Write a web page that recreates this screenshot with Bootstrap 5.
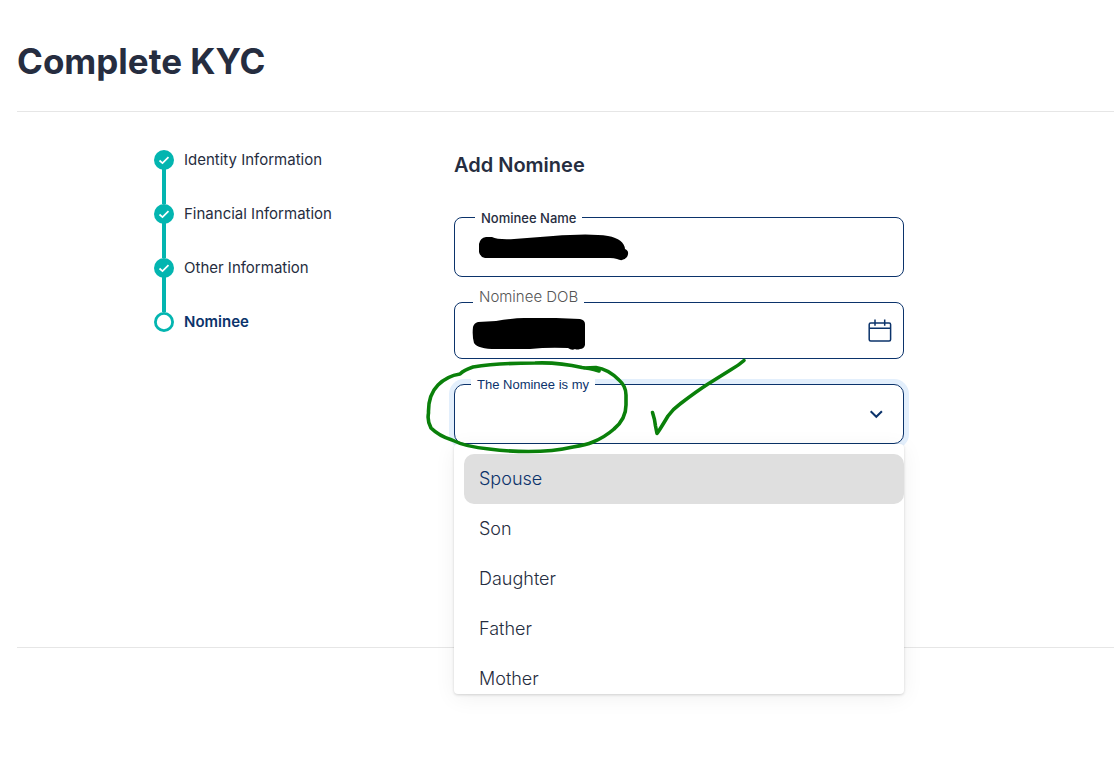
<!DOCTYPE html>
<html lang="en">
<head>
<meta charset="utf-8">
<meta name="viewport" content="width=device-width, initial-scale=1">
<title>Complete KYC</title>
<link href="https://cdn.jsdelivr.net/npm/bootstrap@5.3.0/dist/css/bootstrap.min.css" rel="stylesheet">
<style>
  :root { --ink: #262d40; --navy: #0b336b; --teal: #03b5b0; --rule: #e6e6e6; }
  body { font-family: Inter, "Liberation Sans", sans-serif; color: var(--ink); background: #fff; padding-left: 17px; }
  .page-head { padding: 39px 0 28px; border-bottom: 1px solid var(--rule); }
  .page-head h1 { font-size: 35px; line-height: 44px; font-weight: 700; }
  .kyc-body { padding: 38px 17px 203px 137px; border-bottom: 1px solid var(--rule); }
  .steps { width: 300px; font-size: 15px; line-height: 20px; flex-shrink: 0; }
  .steps li { position: relative; height: 54px; gap: 10px; }
  .steps li:not(:last-child)::before { content: ""; position: absolute; left: 8px; top: 18px; bottom: 0; width: 4px; background: var(--teal); }
  .steps svg { width: 20px; height: 20px; }
  .steps a { color: var(--ink); }
  .steps .current { color: var(--navy); font-weight: 600; }
  .form-col { max-width: 450px; }
  .form-col h2 { font-size: 20px; line-height: 30px; font-weight: 600; margin-bottom: 37px; }
  .field { position: relative; margin-bottom: 25px; }
  .field .form-control, .field .form-select { height: 60px; border: 1px solid var(--navy); border-radius: 8px; padding: 0 25px; background-image: none; color: var(--ink); }
  .field .short { height: 57px; }
  .field .form-select { border-radius: 10px; box-shadow: 0 0 0 5px #e3effc; }
  .field label { position: absolute; left: 21px; top: -9px; padding: 0 6px; line-height: 20px; background: #fff; }
  .label-strong { font-size: 13px; font-weight: 500; }
  .label-soft { font-size: 15px; font-weight: 300; color: #555; }
  .field label.label-soft { left: 19px; top: -15px; }
  .label-accent { font-family: "Liberation Sans", sans-serif; font-size: 13px; color: var(--navy); }
  .field label.label-accent { left: 17px; }
  .field-icon { position: absolute; right: 12px; top: 50%; transform: translateY(-50%); border: 0; background: none; padding: 0; line-height: 0; }
  .ink-mark { position: absolute; pointer-events: none; }
  .ink-name { left: 24px; top: 16px; }
  .ink-dob { left: 18px; top: 14px; }
  .ink-pen { left: -34px; top: -34px; z-index: 1010; }
  .options { position: absolute; display: block; top: 100%; left: 0; width: 100%; height: 250px; overflow: hidden; padding: 10px 0 0 10px; border: 0; border-radius: 4px; box-shadow: 0 1px 3px rgba(0,0,0,.16), 0 4px 22px rgba(0,0,0,.06); }
  .options .dropdown-item { height: 50px; padding: 0 15px 2px; font-size: 18px; font-weight: 300; color: var(--ink); border-radius: 10px; }
  .options .dropdown-item.active { background: #dfdfdf; color: var(--navy); }
</style>
</head>
<body>
<div class="min-vh-100">
<header class="page-head"><h1 class="mb-0">Complete KYC</h1></header>
<main class="kyc-body d-flex">
  <ol class="steps list-unstyled mb-0">
    <li class="d-flex align-items-start"><svg viewBox="0 0 20 20" aria-hidden="true"><circle cx="10" cy="10" r="10" fill="#03b5b0"/><path d="M5.5 10.5l3 2.7 6-6" fill="none" stroke="#fff" stroke-width="1.7"/></svg><a href="#" class="text-decoration-none">Identity Information</a></li>
    <li class="d-flex align-items-start"><svg viewBox="0 0 20 20" aria-hidden="true"><circle cx="10" cy="10" r="10" fill="#03b5b0"/><path d="M5.5 10.5l3 2.7 6-6" fill="none" stroke="#fff" stroke-width="1.7"/></svg><a href="#" class="text-decoration-none">Financial Information</a></li>
    <li class="d-flex align-items-start"><svg viewBox="0 0 20 20" aria-hidden="true"><circle cx="10" cy="10" r="10" fill="#03b5b0"/><path d="M5.5 10.5l3 2.7 6-6" fill="none" stroke="#fff" stroke-width="1.7"/></svg><a href="#" class="text-decoration-none">Other Information</a></li>
    <li class="d-flex align-items-start"><svg viewBox="0 0 20 20" aria-hidden="true"><circle cx="10" cy="10" r="8.6" fill="#fff" stroke="#03b5b0" stroke-width="2.8"/></svg><a href="#" class="text-decoration-none current" aria-current="step">Nominee</a></li>
  </ol>
  <form class="form-col flex-grow-1">
    <h2>Add Nominee</h2>
    <div class="field">
      <input class="form-control" id="name" type="text">
      <label for="name" class="label-strong">Nominee Name</label>
      <svg class="ink-mark ink-name" width="152" height="30" viewBox="0 0 152 30" aria-hidden="true"><path d="M1 10Q2 4 8 3L14 3Q20 6 36 5L75 2Q112-1 130 2Q146 5 147 15Q152 17 149 23Q145 28 139 25Q136 24 132 24L7 24Q2 23 1 18Z" fill="#000" transform="translate(0 1)"/></svg>
    </div>
    <div class="field">
      <input class="form-control short" id="dob" type="text">
      <label for="dob" class="label-soft">Nominee DOB</label>
      <svg class="ink-mark ink-dob" width="116" height="36" viewBox="0 0 116 36" aria-hidden="true"><path d="M6 6L24 5Q42 2 52 2L84 2L108 3Q113 4 113 8L113 29Q112 33 108 33Q105 34 103 33Q100 35 96 32Q76 31 58 33L24 33Q6 33 2 27Q0 20 1 11Q2 7 6 6Z" fill="#000"/></svg>
      <button type="button" class="field-icon" aria-label="Choose date"><svg width="24" height="24" viewBox="0 0 24 24" fill="none" stroke="#0b336b" stroke-width="1.5"><rect x="1.2" y="4" width="21.4" height="18" rx="1.5"/><path d="M1 9.3h22M7 .5v6.2M16.7 .5v6.2"/></svg></button>
    </div>
    <div class="field mb-0">
      <select class="form-select" id="relation"><option selected></option><option>Spouse</option><option>Son</option><option>Daughter</option><option>Father</option><option>Mother</option></select>
      <label for="relation" class="label-accent">The Nominee is my</label>
      <span class="field-icon pe-none"><svg width="32" height="24" viewBox="0 0 32 24" fill="none" stroke="#0b336b" stroke-width="2"><path d="M10.700 9.200l5.600 5.600 5.600-5.600"/></svg></span>
      <div class="options dropdown-menu show">
        <button type="button" class="dropdown-item active">Spouse</button>
        <button type="button" class="dropdown-item">Son</button>
        <button type="button" class="dropdown-item">Daughter</button>
        <button type="button" class="dropdown-item">Father</button>
        <button type="button" class="dropdown-item">Mother</button>
      </div>
      <svg class="ink-mark ink-pen" width="340" height="110" viewBox="0 0 340 110" fill="none" stroke="#0a800a" stroke-width="3.6" stroke-linecap="round" stroke-linejoin="round" aria-hidden="true"><path d="M179 21Q168 18 162 17.500Q138 12 115 13Q78 13 53 17Q44 20 40 24Q27 26 18 35Q8 45 8.500 63Q7 71 11 78Q19 86 32 90Q46 97 69 99Q118 105 153 97Q166 95 173 92Q185 87 194 79Q206 69 206 55V45Q206 36 199 30Q188 19 176 17.500L164 18"/><path d="M232.500 62.500Q235 70 235.500 76L237 83.500Q239 81 248 66Q253 59 260 54Q277 41 288 34L312 19Q319 15 324 10.500"/></svg>
    </div>
  </form>
</main>
</div>
</body>
</html>
